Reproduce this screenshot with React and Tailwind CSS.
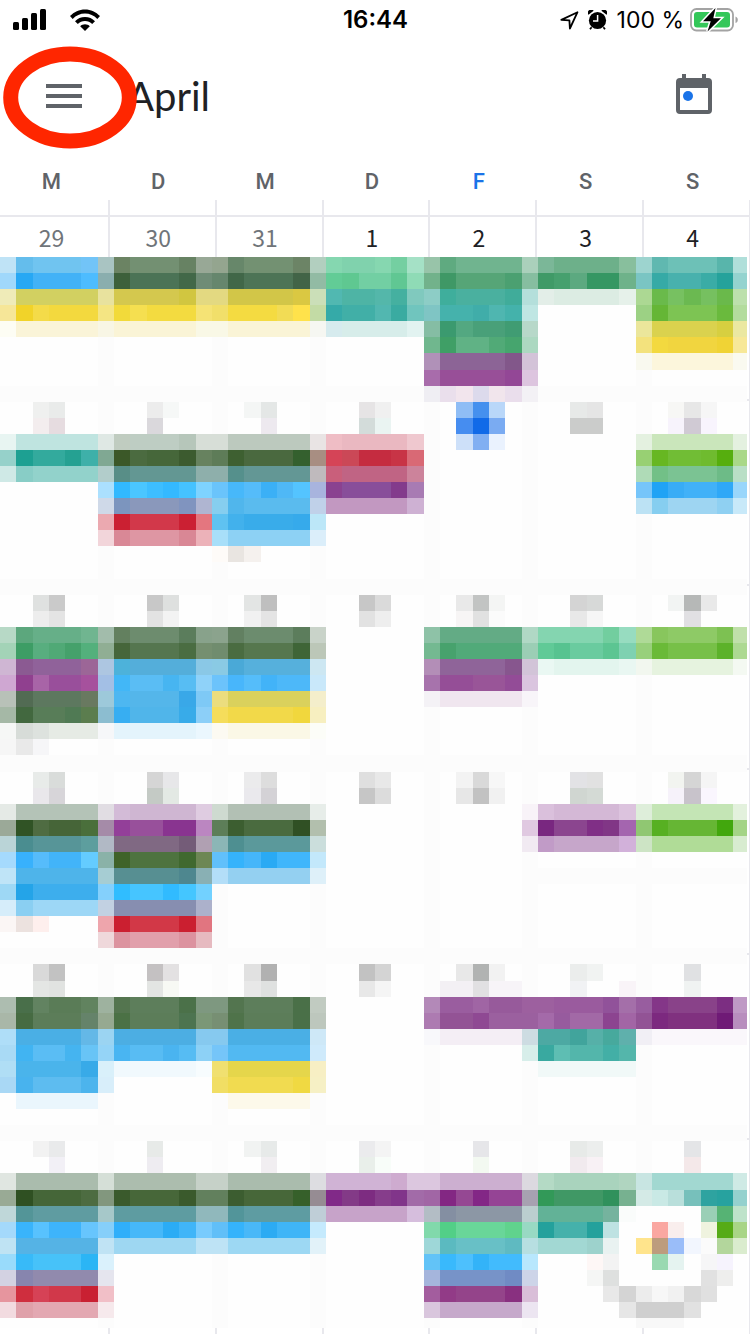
import React from "react";

const COLUMNS = 46;
const BLANK = "fefefe";
const FAINT = "fcfcfc";
const DAY_EDGES = [6, 13, 19, 26, 32, 39];
const WEEK_EDGES = [8, 20, 31, 43, 54];

/* Colours of the pixelated month, one string per row of tiles.
   "12:" moves to column 12, "aabbcc*3" fills three tiles. */
const MOSAIC = [
  "bfe3f6 64bdec 70c4f0*3 72c4f7 a9c4c2 6b8363 739072*3 678263 98a896 94a58f 67876a 739172*3 6c8466 b2cfbf 85d7b0 80d2ad*2 86d7b0 74cfa1 a5e1c6 98c4a9 5faa80 70b48f*4 aad0bb 7bb798 6db08a*4 88bf9d 9dd4cf 60b8b0 6dc1b7*3 58b5ab b0dfda",
  "a0d8fb 27a8f4 42b2f7*3 4dbcff 8aaeae 3d603b 4b7356*3 426848 6f8c76 66866d 416748 4d7456*3 426447 92bba4 62cc96 5fc891 72cfa3*2 60c793 8fdbb6 72b28b 3f9866 56a577*3 4ba071 86bea0 3f9a67 46a06e 5ca980 359763*2 6eb28a 7ac5c3 36aaa6 48b1ad*2 3aaca6 25a29b 94d3cf",
  "efebb8 d2d061*5 e8e29e d4c84e*4 d1c640 e3d981*2 d2c648*4 dac842 cbdfb8 51b8b1 4eb4a5*2 54b7aa 45b0a0 80c9be 8dcdc6 3fae9c 4ab09f*3 40ac9a b4dfdb e3eee8 dcece3*4 e6f1ea acd893 6aba4b 77c161 6bb951 76c060 6ab94b bce0ac",
  "f6e698 f1d329 f4db49 f3d93e*3 f4e583 f2da3a f5df50 f3db40*3 f5e375 f1df6a f4db41*3 f2dc55 ffe24b c3dba5 35aaa8 41afa7*2 52b7b0 3aaba1 70c5be 7fc5c4 45b2ac*2 40ada9 4fb6b0 44b2ab bfe6e3 39: 9cd184 65b636 7dc453*3 6aba3d b3dc9d",
  "fdfdf4 faf4d8*5 f8f6e5 faf4d6*5 f9f8e6*2 faf4d6*5 f6f7f2 d6ebee d7edea*4 e2f3f1 85bda4 3b9a6f 53a881 49a079*2 409c73 b7d8c9 39: ebe69b dad24e*4 d7cf40 ebe8a1",
  "26: 70b78e 3f9f66 60b285*2 51aa77 46a56e acd8c1 39: f3e27d f3d93f f1d53f*3 f0d335 f7e898",
  "26: b091b8 8c6496*4 82578a d3c3d8 39: f9f9ef fcf6dc*5 fafaf0",
  "26: a86cab 984f98*4 934796 ddc5df",
  "26: efeef3 eadfec f2e5ed dcdaec f1e5ec eadeec f3f1f5",
  "2: eff0ef e9ebea 9: ececec f6f8f7 15: f4f6f5 e4e7e6 22: e6e4e5 f0f0f0 28: 8fbdf5 4590ee b9d7f9 35: e7e9e8 e5e5e5 41: f7f7f5 e7e7e7 f6f6f6",
  "2: f3edee e6dce0 9: dad8dc 16: ede9ef 22: d3dcda eaf4f2 28: 468df0 116ae8 7aabf2 35: cbcccb*2 41: f7f3fc d0cad4 f8f4fd",
  "e8f5f2 bfe4e0*5 dfe8e4 c0ccc0 becdc3*3 b6c6ba d7ded7*2 bcc9be*5 e9e4e4 efbdc5 eab8c1*4 efc8cf 28: cde0f9 81aff2 eaf2fe 39: e4f1e0 cae6bb*5 e4f1e0",
  "96d1ca 1da092 33aa9d*2 25a192 3eb0a9 80a893 3b5828 4b6b40 46673a*2 3c5b2f 67825f 5e7c58 3e6031 4a693f*3 34602e a88e82 d54457 cb4857 c52c40*2 c83446 d96975 39: 98d073 67b722 71bd35*2 6fbb2f 56ae0e a9d888",
  "cfe9e6 88cdc6 92d2cb*4 b2cdcb 588e87 639793*4 8eafab*2 55908c 639795*4 bfbabd c95f7b c06484*4 cc839b 39: afdbb7 72c087 7bc393*3 6dbb87 b9dfc6",
  "6: abe0fe 31b9ff 4ac6ff 3dbeff 34b9ff 45c2ff 7ed3ff 6ac4fb 47b8fa 55bcfa 3bb0f6 4fb8f6 54c4ff a8b4de 8a4290 884e9a*3 833b8c a87bb3 39: 76c5fa 20a3f5 38acf6 41b1f8*2 2fa8f7 99d6fb",
  "6: cfd9e8 7c95be 8a98bb*3 8094bf afb5d1 86ceef 50b6ec 5abbee*4 c0d1e9 c298c1*5 ceb1d3 39: bce2f4 86cef0 9ed5f2*3 8fd0f2 c8e9f9",
  "6: eba9b0 cb2032 d2384a*3 cb2033 e4767f 5fc2f1 42b1ec 39acea*3 36aaeb bce7f8",
  "6: f2d5da d98896 de96a3*3 d98795 ecb2b9 a8dff9 8dd1f4*5 dbeefa",
  "13: fefbf8 e9e5e1 f5f1ee",
  "",
  "",
  "2: dfe1e0 cacaca 9: c8c8c8 dee0df 15: e3e5e4 bfbfbf 22: c7c7c7 dadada 28: e9e9e9 c2c4c3 f4f5f4 35: d4d4d4 d7d9d8 41: f2f4f3 b6b8b7 e9e9e9",
  "2: ededed e4e4e4 9: e3e3e3 f3f3f3 15: f1f1f1 e4e4e4 22: e2e2e2 eeeeee 28: f7f5f5 e1e1e1 fbfbfb 35: e8e8e8 f6f6f6 42: e1e0e3",
  "b7d9c6 5ca77d 66af88*3 70b590 a2bcab 63805f 6d8c6e*3 5b7d5c 88a28b 8ba38d 628061 6c8c6e*3 5c7d5c c9d3c9 26: 8ec2a7 63ab85*5 b0d8c5 84d5b0*4 72ce9f 97dcc0 afda97 88c65d 8eca66*3 7dc152 c0e0aa",
  "a3d3b7 3d9d65 58ae7f 50a976 45a16b 53b07c 90ae94 46663a 55764f*3 4a6d42 758f70 708c6e 4a6c41 56774e*3 3f6537 bcc7b8 26: 74b991 47a26d 51aa79*4 9bceb5 60ca97 57c390 6acb9f*2 5cc592 7ed1b1 98d07b 6aba38 77c048*3 5cb22a add992",
  "cfb6d3 8b5a92 90629a*3 9c6697 adc6e1 4db2da 54aeda*4 8ac8e6 8acae4 4aa9d7 56b0dc*4 cde7f2 26: b38eb7 8f6499*4 87568e d2c4d8 eaf8f3 e3f5ee*4 e9f7f2 f2f7ef e6f3df*5 f4f9f2",
  "cfa7d2 90408f a864a7 994f9b*2 a6519d a3bfe5 42b7f7 5abdf4*2 47b5f1 57bdf3 8fd2f9 6cc3fb 48b6fb 55bdfa 42b3f8 4db8f9*2 c9e8fa 26: a773ac 954e97*2 995598*2 934c97 dac5df",
  "b8c1b8 526b53 5d785f*3 697960 9dc9da 4db7f1 54b6ea*3 39a8e8 7ec9f6 ebdd7e dad15c*5 f4eecb 26: f4f2f6 f0e6ef*5 f8f5f9",
  "a5b8a6 42683f 587d58*2 507a54 5b7d4e 8cbdd0 37aef2 50b5ea*3 38abe9 8ccff8 f5dd5b f2d949*4 f1d73d f7efc0",
  "f6f7f6 d7dcd8 dde2de e6ebe5*3 f6f7f9 e4f4fc*5 ebf7fe fcfaf2 fbf8e6*5 fcfdf8",
  "f6f6f6 e9e9e9 f6f6f8",
  "",
  "2: e8ebe9 d9dcda 9: d5d5d5 e7e7e9 15: ebebec dddddd 22: dfdfdf e8e8e8 28: f3f3f3 d9d9d9 f7f7f7 35: e2e2e5 e1e1e1 41: f2f4f0 d5d5d5 f5f5f5",
  "2: e9e7eb d7d5d9 9: c4cac5 e3e9e4 15: eae9ed d4d2d6 22: c6c6c6 dcdcdc 28: e7e7e7 c2c2c2 f1f1f1 35: d0d6d1 d4dad5 41: f6f2fa c8c3cb faf6fe",
  "e5eae6 b4c3b7*5 e1dde3 d3bbd7 cfb6d2*4 dfcce1 cedad0 b2c0b4*5 e7ede9 32: f8f3f8 dac0dc d4b8d6*4 dcc3de deeeda c4e5b5*5 e3f1dd",
  "9ba998 305325 4f6c42 466538*2 4a6f3b a58ba8 933f99 98509b*2 893490*2 bb86c1 5d7e58 3c5e30 4a6b3f*3 305024 b2bfad 32: e0c9e1 792780 8b458f*2 802f86 813686 a465af 90c772 57b022 66b634*3 42a70d a4d486",
  "bad4d7 4a8d90 579598*3 5d9e9e b1b9c5 806983*4 745c78 b0a0b2 8bb6b6 4e8f91 5b999b*4 cbdedc 32: f1eaf2 c19bc7 c6a6ca*4 d2b1da cde4c5 b0dc97*5 d8ecd0",
  "a5dafd 38b1fc 56bcfb 42b4f9*2 64ccff 8ab2a8 3f6329 4e733f*3 40692f 6d8754 61c0fb 35b3fb 45b6fa 2aaaf4 40b6fb*2 c3e8fb",
  "bfe4f7 4eb4ea*5 a6cdd3 578f92*4 4e878f 89b0b4 b3def8 94d0f1*5 def0f9 32: fcfcfc*14",
  "9ed8f5 24a4e8 3daeed*4 84d0fc 30bdff 46c5ff*2 31bbff 44c6ff 72d1ff",
  "d6edfa 8acff2 9dd7f6*4 c2d1e2 878eb0*5 acb1cb",
  "fbf6f5 ece2df feefed 6: eea5ac cb1f30 d23847*3 cb1f30 e17580",
  "6: efd8db dc939f e19fab*3 dc929f e6bac0",
  "",
  "2: d9d9d9 c2c2c2 9: c4c1c2 e3e1e2 15: e1e1e1 b1b1b1 22: c2c2c2 d4d4d4 28: e8e8e8 b1b3b2 f2f2f2 35: ebedec f1f3f2 42: e0e1e3",
  "2: e4e6e4 e1e3e1 9: e3e5e3 f7f9f4 15: e8e8e8 dfe1e0 22: e8e8e8 f5f5f5 27: f3f0f4*2 e1e0e2 f7f4f8*2 35: f1f2f4 38: f9f4f8 42: f0f3f2",
  "adbdb0 496f4a 628361 5a7c57*2 61835f 9eb29f 54754f 5d7e5b*3 4b7149 7e9880*2 53754f 5d7e5b*3 4a7048 c1cbc1 26: b389b8 9a5d9f*2 a065a4 975a9b*2 9d609f*2 9a5b9e*3 91529a a46fa9 985d9f 843688 894289*3 7c2e82 bf99c5",
  "a9b7a8 466b42 5c7d59*3 65836a 96a991 4b7145 5c7d59*3 4d7450 7b9777 778f73 4f734a 5c7d59*3 4a7048 bdc7bd 26: ad7bb1 935395*2 8f4993 9b609f*3 a46aa9 975b9e a269a6*2 8c4490 a265a5 925395 7c297f 80317f*3 6f1a76 b88ebe",
  "afdef8 4aafe5*4 64b8e7 9bd4f2 4caee3*5 86c9ef*2 4aafe5*5 cee8f7 26: f8f8fb f4eef5*5 cddce2 4da9a3*2 41a49c 56b0a8 47a99d 5fb0ac f1eff5 faf7fb*6",
  "a9daf5 41b4f2 5abdf4*2 45b4f0 68c4f6 95d4f7 49b5f2 58bcf3*2 4ab4f0 56bcf3 8dd1f6 75c5f9 52b9f2*5 cfeafb 32: d7eeea 39a9a0 5ebeb3 53b6ab*2 43afa6 54b6ab",
  "b0def5 4ab4eb*4 38aae8 d9f0fa f1f9fd*5 f7fcfe f0e070 e5d64b*5 f7efc4 33: f1f9f8*6",
  "a9d8f5 48b3ee 5dbcf0*3 4cb4ed d8eefa 13: f1de64 f1db50*4 f0d942 f6f0c5",
  "1: eaf6fd*5 14: fdf9ea*5",
  "",
  "",
  "2: f2f2f2 e9eaeb 9: e7eae8 15: f1f3f2 e7eae9 22: ebebed f4f4f4 29: e6e6e9 35: e7eae8 eceeed 42: e4e5e7",
  "3: f2f0f6 9: eeecf1 16: f1eef1 22: e9efea f8fdf9 29: f3f9f1 35: f1eaee f8f1f5 42: f4e8e9",
  "e0e6e1 aabcad*5 d5dfd7 acbdae*5 c6d1c8*2 aabcad*5 dddde1 d0b3d5*4 ceabcf dcc7df*2 ccafd0*5 dcd9e0 b4dac5 a9d3bd*4 b0d5c0 c8e5e2 a2d8d1*5 cfeae5",
  "99aa95 2f5022 456638*3 4d6c41 82977e 3a5a2c 476739*3 3a5a2c 62805d*2 3c5d30 476739*3 36602a 968c93 812988 833a87 7d2c81 863d8b 81358a a26ba8 a166a5 832783 954893 832786 954495*2 a7a1b1 329958 409865*3 30915c 77b190 d4eae6 c9e9e5 b9dfdb 77c0bb 2ea3a0 27a29f 94d1ce",
  "bfd7d9 539598 5f9ca1*4 a6c8c9 5e9ca1*5 90b8bc*2 52959a 5e9ca2*4 bfced7 c7a3c9*5 d6bedd b3bdc5 848fa2 8c97a5*4 bbcecf 62b297*4 75b39e fafcfb fefefe*4 9acfb6 56b374 bee3ca",
  "a4d9fb 39b4fb 58c2fe 3eb4fb*2 67c5fd 86cffa 30affa 46b8f9*2 2bacf5 40b5f8 78cbfd 61bff8 35b3fb 49b8f8 2cabf3 3fb5f7*2 c5eafd 26: 81d9ab 52cf87 69d699*3 60d38d 98d9c3 24a19c 45b1ab*2 24a19c bee2e2 fefefe*2 faa7a1 f9eeed fefefe eff3df 56ab17 a8d586",
  "bfe3f3 55b3e5*5 c0e3f4 9ed7f2*5 bee3f5*2 9dd8f3*5 e2f2f9 26: 9ed7d8 5bbac0 68c0c6*3 5fbac1 b7dfe1 a2d8d3*3 9dd2cc e9f2f1 fefefe ffe48c bd9c7d 9abdf9 f2f6fe fbfbfb b3d69c daecce",
  "99dbfb 38baf8 47c2f9*3 2bb5f5 daf1fc 26: 62c3f7 39b9fc 4dc0fd 33b3f8 42bbfd*2 b8e7fd 36: fef7f6 f3f3f3 fefefe*2 99d9b1 e5f3f0 fefefe f6f6f7 f6f3fd",
  "d3d2e2 8785ae 918aad*4 e5e5ee 26: a5b5dc 7793c8*4 708bc4 cdd4e8 36: f5f6f5 dee0df fefefe*5 e1e1e1 eeeeed",
  "e6959e cf2e3e d64256 d1384a*2 c92032 f1bfc7 26: a35d9e 923b87 94448a*3 893080 d9bed8 37: e8e8e8 d4d4d4 ececec f7f7f7 f1f1f1 d8d8d8 e0e0e0",
  "f2dbe0 dfa1aa e3a8b2*4 f6e9ec 26: d9c6dd c6a9cb*5 ece5f1 38: e6e6e6 cfcfcf*3 e1e1e1",
  "39: f8f8f8*3",
];

function parseRow(source, index) {
  const tiles = Array(COLUMNS).fill(WEEK_EDGES.includes(index) ? FAINT : BLANK);
  DAY_EDGES.forEach((edge) => {
    tiles[edge] = FAINT;
  });
  let column = 0;
  source
    .split(" ")
    .filter(Boolean)
    .forEach((token) => {
      if (token.endsWith(":")) {
        column = parseInt(token, 10);
        return;
      }
      const [color, count] = token.split("*");
      for (let i = 0; i < Number(count || 1); i += 1) {
        tiles[column] = color;
        column += 1;
      }
    });
  return tiles;
}

const MOSAIC_ROWS = MOSAIC.map(parseRow);

const DAYS = [
  { name: "M", date: 29, outside: true },
  { name: "D", date: 30, outside: true },
  { name: "M", date: 31, outside: true },
  { name: "D", date: 1 },
  { name: "F", date: 2, today: true },
  { name: "S", date: 3 },
  { name: "S", date: 4 },
];

function SignalIcon() {
  return (
    <svg width="34" height="22" viewBox="0 0 34 22" aria-hidden="true">
      <rect x="0" y="13" width="6" height="8" rx="1.5" />
      <rect x="9" y="9" width="6" height="12" rx="1.5" />
      <rect x="18" y="4" width="6" height="17" rx="1.5" />
      <rect x="27" y="0" width="6" height="21" rx="1.5" />
    </svg>
  );
}

function WifiIcon() {
  return (
    <svg width="30" height="22" viewBox="0 0 30 22" aria-hidden="true">
      <path d="M0 7.1C4 3 9.200 .5 15 .5s11 2.500 15 6.600l-2.700 2.800C24 6.500 19.700 4.500 15 4.500S6 6.500 2.700 9.900z" />
      <path d="M5 12.200C7.600 9.600 11 8 15 8s7.400 1.600 10 4.200l-2.800 2.700C20.300 13 17.800 11.900 15 11.900S9.700 13 7.800 14.900z" />
      <path d="M10.200 17.200c1.300-1.200 3-1.900 4.800-1.900s3.500.7 4.800 1.900L15 22z" />
    </svg>
  );
}

function LocationIcon() {
  return (
    <svg width="19" height="19" viewBox="0 0 19 19" fill="none" stroke="#000" strokeWidth="1.8" strokeLinejoin="round" aria-hidden="true">
      <path d="M17.500 1.200L1.300 8.900l8.100.5.500 8.100z" />
    </svg>
  );
}

function AlarmIcon() {
  return (
    <svg width="19" height="20" viewBox="0 0 19 20" aria-hidden="true">
      <circle cx="9.500" cy="10.500" r="8.600" />
      <path d="M.5 4.700A3.200 3.200 0 0 1 5.600.8zM18.500 4.700A3.200 3.200 0 0 0 13.400.8z" />
      <path d="M3.600 17.300l-1.600 2M15.400 17.300l1.600 2" stroke="#000" strokeWidth="1.800" />
      <path d="M9.600 5v6H5" fill="none" stroke="#fff" strokeWidth="1.500" />
    </svg>
  );
}

function BatteryIcon() {
  return (
    <svg width="48" height="24" viewBox="0 0 48 24" aria-hidden="true">
      <rect x="1" y="1" width="42" height="21.500" rx="5.500" fill="#fff" stroke="#a3a3a3" strokeWidth="1.800" />
      <rect x="4" y="4" width="36" height="15.500" rx="3" fill="#34c759" />
      <path d="M45.500 8.500c1.800.7 2.300 2 2.300 3.300s-.5 2.600-2.300 3.300z" fill="#a3a3a3" />
      <path d="M25.500 0L13 13.200h7.700L17.500 23.500 31 10.200h-7.700z" fill="#000" stroke="#fff" strokeWidth="3" paintOrder="stroke" />
    </svg>
  );
}

function CalendarIcon() {
  return (
    <svg width="36" height="40" viewBox="0 0 36 40" aria-hidden="true">
      <path
        fill="#5f6368"
        fillRule="evenodd"
        d="M6 0h4v4h16V0h4v4h2a4 4 0 0 1 4 4v28a4 4 0 0 1-4 4H4a4 4 0 0 1-4-4V8a4 4 0 0 1 4-4h2zM4 14v22h28V14z"
      />
      <circle cx="12" cy="22" r="5" fill="#1a73e8" />
    </svg>
  );
}

function StatusBar() {
  return (
    <div className="grid h-10 shrink-0 grid-cols-3 items-center pl-[13px] pr-3 font-['Inter',sans-serif] text-[23px] leading-none text-black">
      <div className="flex items-center gap-[23px]">
        <SignalIcon />
        <WifiIcon />
      </div>
      <div className="text-center text-[24px] font-semibold">16:44</div>
      <div className="flex items-center justify-end gap-[6px]">
        <div className="flex items-center gap-[9px]">
          <LocationIcon />
          <AlarmIcon />
        </div>
        <span className="whitespace-nowrap pl-1">100 %</span>
        <BatteryIcon />
      </div>
    </div>
  );
}

function Header() {
  return (
    <header className="flex h-28 shrink-0 items-center pl-[46px] pr-[38px]">
      <button type="button" aria-label="Menü" className="relative">
        <svg width="36" height="24" viewBox="0 0 36 24" fill="#5f6368" aria-hidden="true">
          <path d="M0 0h36v4H0zM0 10h36v4H0zM0 20h36v4H0z" />
        </svg>
        <svg className="absolute -left-[43px] -top-[38px] max-w-none" width="134" height="103" viewBox="0 0 134 103" fill="none" aria-hidden="true">
          <ellipse cx="67" cy="51.500" rx="59.300" ry="43.500" stroke="#ff2600" strokeWidth="15" />
        </svg>
      </button>
      <h1 className="pl-[45px] font-['Lato',sans-serif] text-[40px] leading-none text-[#202124]">April</h1>
      <button type="button" aria-label="Heute" className="ml-auto pb-1">
        <CalendarIcon />
      </button>
    </header>
  );
}

function DayGrid({ className, children }) {
  return <div className={`-mr-px ml-[3px] grid shrink-0 grid-cols-7 ${className}`}>{children}</div>;
}

function Mosaic() {
  return (
    <div role="img" aria-label="Termine" className="flex min-w-0 flex-1 flex-col">
      {MOSAIC_ROWS.map((row, r) => (
        <div key={r} className="flex min-h-0 basis-0" style={{ flexGrow: r === MOSAIC_ROWS.length - 1 ? 10 : 16 }}>
          {row.map((color, c) => (
            <div
              key={c}
              className="basis-0"
              style={{ flexGrow: c === COLUMNS - 1 ? 14 : 16.3, backgroundColor: `#${color}` }}
            />
          ))}
        </div>
      ))}
    </div>
  );
}

function WeekTicks() {
  return (
    <div className="flex w-[3px] flex-col border-r border-[#e8e8ed]">
      <div className="grow-[143] basis-0 border-b-2 border-[#e8e8ed]" />
      <div className="grow-[185] basis-0 border-b-2 border-[#e8e8ed]" />
      <div className="grow-[184] basis-0 border-b-2 border-[#e8e8ed]" />
      <div className="grow-[184] basis-0 border-b-2 border-[#e8e8ed]" />
      <div className="grow-[185] basis-0 border-b-2 border-[#e8e8ed]" />
      <div className="grow-[190] basis-0" />
    </div>
  );
}

export default function App() {
  return (
    <div className="flex min-h-screen flex-col overflow-hidden bg-white">
      <StatusBar />
      <Header />
      <main className="flex flex-1 flex-col">
        <DayGrid className="h-12 font-['Roboto',sans-serif]">
          {DAYS.map((day, i) => (
            <div
              key={i}
              className={`flex items-center justify-center pr-[10px] pt-3 text-[22px] leading-none font-medium ${
                day.today ? "text-[#1a73e8]" : "text-[#5f6368]"
              }`}
            >
              {day.name}
            </div>
          ))}
        </DayGrid>
        <DayGrid className="h-[15px]">
          {DAYS.map((day, i) => (
            <div key={i} className="border-r-2 border-[#e8e8ed]" />
          ))}
        </DayGrid>
        <div className="h-[2px] shrink-0 bg-[#e8e8ed]" />
        <DayGrid className="h-10 font-['Noto_Sans_CJK_SC',sans-serif]">
          {DAYS.map((day, i) => (
            <div
              key={i}
              className={`flex items-center justify-center border-r-2 border-[#e8e8ed] pr-2 text-[23px] leading-none ${
                day.outside ? "text-[#70757a]" : "text-[#202124]"
              }`}
            >
              {day.date}
            </div>
          ))}
        </DayGrid>
        <div className="flex flex-1">
          <Mosaic />
          <WeekTicks />
        </div>
        <DayGrid className="h-[6px]">
          {DAYS.map((day, i) => (
            <div key={i} className="border-r-2 border-[#e8e8ed]" />
          ))}
        </DayGrid>
      </main>
    </div>
  );
}
